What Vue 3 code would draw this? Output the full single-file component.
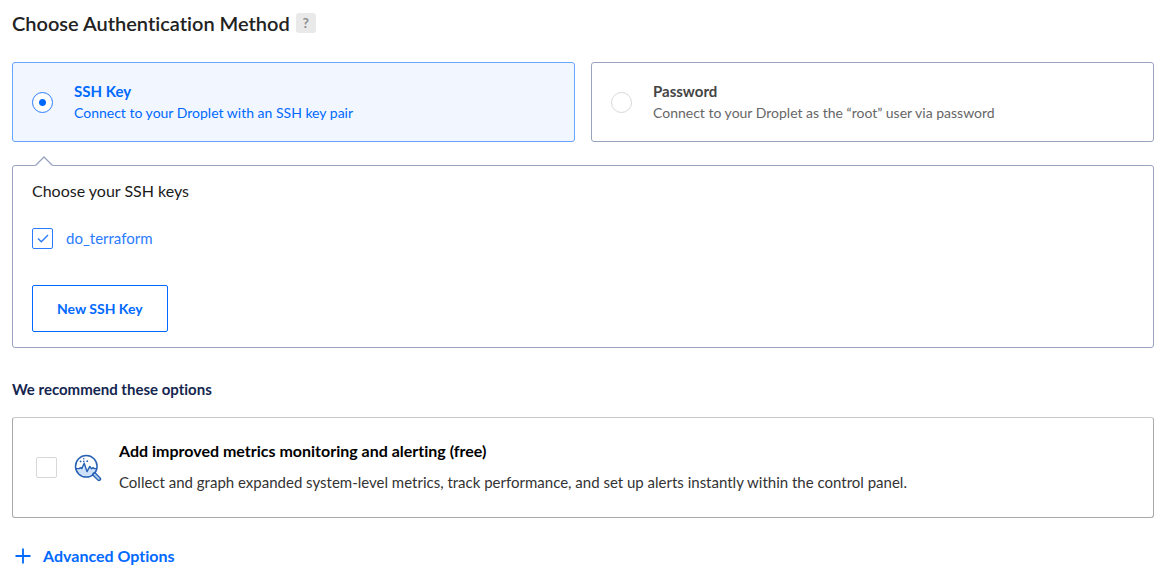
<script setup>
import { ref } from 'vue'

const method = ref('ssh')
const keySelected = ref(true)
const monitoring = ref(false)
</script>

<template>
  <form class="page" @submit.prevent>
    <header class="heading">
      <h2>Choose Authentication Method</h2>
      <button type="button" class="help" aria-label="Help">?</button>
    </header>

    <div class="methods">
      <label class="card" :class="{ selected: method === 'ssh' }">
        <input v-model="method" class="radio" type="radio" name="method" value="ssh" />
        <span class="card-text">
          <strong>SSH Key</strong>
          <span>Connect to your Droplet with an SSH key pair</span>
        </span>
      </label>
      <label class="card" :class="{ selected: method === 'password' }">
        <input v-model="method" class="radio" type="radio" name="method" value="password" />
        <span class="card-text">
          <strong>Password</strong>
          <span>Connect to your Droplet as the “root” user via password</span>
        </span>
      </label>
    </div>

    <section class="keys">
      <svg class="pointer" width="18" height="10" viewBox="0 0 18 10" aria-hidden="true">
        <path d="M0 10 L9 1 L18 10Z" fill="#fff" />
        <path d="M0.5 9.5 L9 1 L17.5 9.5" fill="none" stroke="#99a3c0" stroke-width="1.3" />
      </svg>
      <p class="keys-title">Choose your SSH keys</p>
      <label class="key">
        <span class="tick">
          <input v-model="keySelected" class="check" type="checkbox" />
          <svg v-if="keySelected" width="12" height="9" viewBox="0 0 12 9" aria-hidden="true">
            <path d="M1 4.5 L4.3 7.7 L11 1" fill="none" stroke="#2b7bff" stroke-width="1.4" />
          </svg>
        </span>
        do_terraform
      </label>
      <button type="button" class="new-key">New SSH Key</button>
    </section>

    <h3>We recommend these options</h3>

    <label class="option">
      <input v-model="monitoring" class="check" type="checkbox" />
      <svg class="lens" width="28" height="28" viewBox="0 0 28 28" aria-hidden="true">
        <circle cx="12.3" cy="12.3" r="10.8" fill="#fff" />
        <path d="M1.6 14 H6 L7.5 12.5 L9 15 L10.5 9 L13 17.5 L15.5 12.5 L17 14 H23 A10.8 10.8 0 0 1 1.6 14Z" fill="#cfe1fa" />
        <circle cx="12.3" cy="12.3" r="10.8" fill="none" stroke="#2560b4" stroke-width="1.5" />
        <path d="M1.6 14.6 H5 L6.6 13.6 L7.8 14.6 L10.2 9.2 L13 17.6 L15.8 12.4 L17.4 14.8 L19 13.6 L20.4 14.6 H23" fill="none" stroke="#2560b4" stroke-width="1.4" stroke-linejoin="round" />
        <path d="M20.4 20.4 L25 25" stroke="#2560b4" stroke-width="4.4" stroke-linecap="round" />
        <path d="M20.7 20.7 L24.8 24.8" stroke="#b5cdf0" stroke-width="1.8" stroke-linecap="round" />
        <g fill="#2560b4">
          <circle cx="6.6" cy="7.4" r="0.9" />
          <circle cx="9.8" cy="4.8" r="0.8" />
          <circle cx="9.8" cy="7.4" r="0.8" />
          <circle cx="13.2" cy="7.2" r="0.9" />
        </g>
      </svg>
      <span class="option-text">
        <strong>Add improved metrics monitoring and alerting (free)</strong>
        <span>Collect and graph expanded system-level metrics, track performance, and set up alerts instantly within the control panel.</span>
      </span>
    </label>

    <button type="button" class="advanced">
      <svg width="16" height="16" viewBox="0 0 16 16" aria-hidden="true">
        <path d="M8 0.5 V15.5 M0.5 8 H15.5" stroke="#0069ff" stroke-width="1.8" />
      </svg>
      Advanced Options
    </button>
  </form>
</template>

<style>
body {
  background: #fff;
}
</style>

<style scoped>
.page {
  display: flex;
  flex-direction: column;
  align-items: stretch;
  padding: 11px 12px 8px;
  font-family: Lato, "Open Sans", sans-serif;
  font-size: 16px;
  line-height: 24px;
  font-variant-ligatures: none;
  color: #1b1b1b;
}

h2,
h3,
p {
  margin: 0;
}

button {
  font: inherit;
  font-variant-ligatures: inherit;
  cursor: pointer;
}

input {
  appearance: none;
  box-sizing: border-box;
  flex: none;
  margin: 0;
  width: 21px;
  height: 21px;
  background: #fff;
  border: 1px solid #d8d8d8;
}

.heading {
  display: flex;
  align-items: center;
  gap: 6px;
  margin-bottom: 27px;
}

h2 {
  font-size: 20px;
  line-height: 24px;
  font-weight: 600;
  color: #222;
}

.help {
  width: 20px;
  height: 20px;
  padding: 0;
  border: 0;
  border-radius: 3px;
  background: #e9e9e9;
  color: #8f8f8f;
  font-size: 14px;
  line-height: 20px;
  font-weight: 700;
}

.methods {
  display: grid;
  grid-template-columns: 1fr 1fr;
  gap: 16px;
}

.card {
  display: flex;
  align-items: center;
  gap: 21px;
  padding: 17px 19px;
  border: 1px solid #99a3c0;
  border-radius: 3px;
  cursor: pointer;
}

.card-text {
  display: flex;
  flex-direction: column;
  font-size: 14px;
  line-height: 22px;
  color: #666;
}

.card-text strong {
  font-size: 15px;
  font-weight: 700;
  color: #444;
}

.selected {
  border-color: #66a5ff;
  background: #f2f7ff;
}

.selected .card-text,
.selected .card-text strong {
  color: #0069ff;
}

.radio {
  border-radius: 50%;
}

.radio:checked {
  border-color: #2b7bff;
  background: radial-gradient(circle, #0069ff 3px, #fff 4px);
}

.keys {
  position: relative;
  display: flex;
  flex-direction: column;
  align-items: flex-start;
  margin-top: 23px;
  padding: 13px 19px 15px;
  border: 1px solid #99a3c0;
  border-radius: 3px;
}

.pointer {
  position: absolute;
  left: 22px;
  top: -10px;
}

.keys-title {
  margin-bottom: 23px;
}

.key {
  display: flex;
  align-items: center;
  gap: 13px;
  margin-bottom: 35px;
  font-size: 15px;
  color: #2b7bff;
  cursor: pointer;
}

.tick {
  display: grid;
  place-items: center;
}

.tick > * {
  grid-area: 1 / 1;
}

.tick svg {
  pointer-events: none;
}

.check {
  border-radius: 2px;
}

.check:checked {
  border-color: #2b7bff;
}

.new-key {
  padding: 11px 24px;
  border: 1px solid #0069ff;
  border-radius: 2px;
  background: #fff;
  color: #0069ff;
  font-size: 14px;
  line-height: 23px;
  font-weight: 700;
}

h3 {
  margin: 29px 0 16px;
  font-size: 15px;
  line-height: 24px;
  font-weight: 700;
  color: #14264f;
}

.option {
  display: flex;
  align-items: center;
  padding: 21px 23px;
  border: 1px solid #a9a9a9;
  border-top-color: #c8c8c8;
  border-radius: 3px;
  cursor: pointer;
}

.lens {
  flex: none;
  margin: 0 17px;
}

.option-text {
  display: flex;
  flex-direction: column;
  gap: 7px;
  padding-bottom: 2px;
  font-size: 15px;
  color: #333;
}

.option-text strong {
  font-size: 16px;
  font-weight: 700;
  color: #000;
}

.advanced {
  display: flex;
  align-items: center;
  align-self: flex-start;
  gap: 12px;
  margin-top: 26px;
  padding: 0 3px;
  border: 0;
  background: none;
  color: #0069ff;
  font-weight: 700;
}
</style>
